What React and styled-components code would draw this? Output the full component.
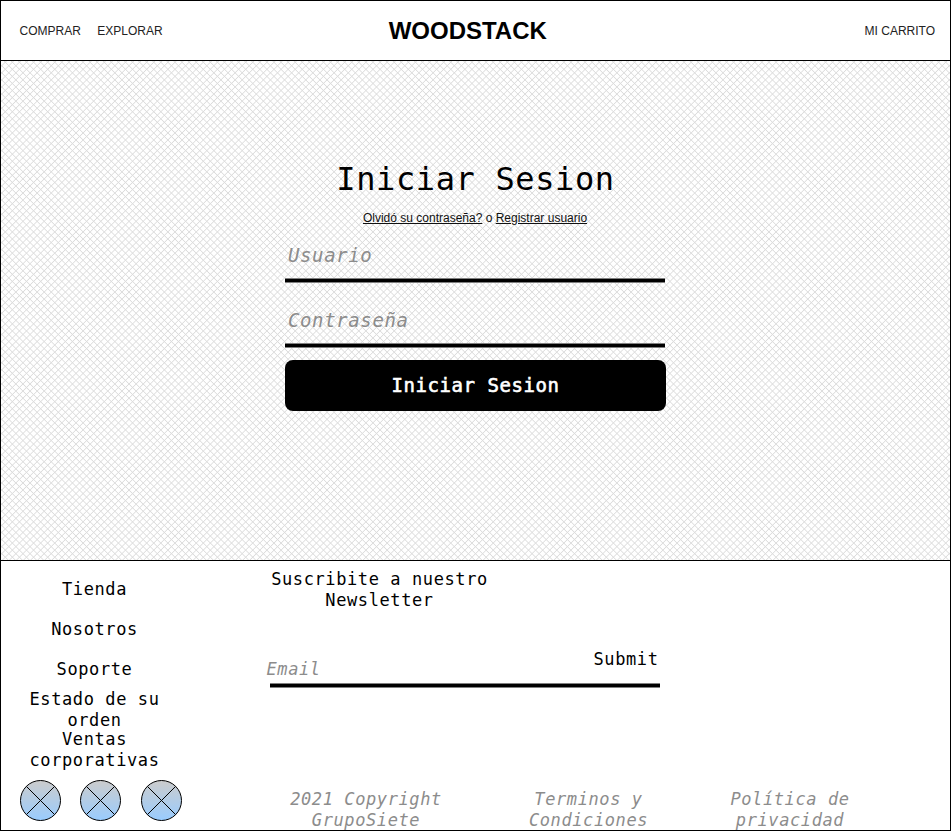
import React from "react";
import styled, { createGlobalStyle } from "styled-components";

const MONO = '"DejaVu Sans Mono", monospace';

const GlobalStyle = createGlobalStyle`
  * { box-sizing: border-box; }
  body { margin: 0; background: #fff; color: #000; font-family: "Liberation Sans", Arial, sans-serif; }
  h1, h2, p { margin: 0; font-weight: 400; }
  a { color: inherit; }
`;

const Page = styled.div`
  width: 951px;
  height: 831px;
  border: 1px solid #000;
  display: grid;
  grid-template-rows: 60px 500px 269px;
  overflow: hidden;
`;

const Header = styled.header`
  display: grid;
  grid-template-columns: 1fr auto 1fr;
  align-items: center;
  padding: 0 15px 0 18.5px;
  border-bottom: 1px solid #000;
`;

const Nav = styled.nav`
  display: flex;
  gap: 16.5px;
  justify-content: ${(p) => (p.$end ? "flex-end" : "flex-start")};
  font-size: 12px;
  line-height: 14px;
`;

const NavLink = styled.a`
  color: #222;
  text-decoration: none;
`;

const Brand = styled.div`
  font-size: 24px;
  font-weight: 700;
  line-height: 28px;
  margin-right: 19px;
`;

const Main = styled.main`
  display: flex;
  flex-direction: column;
  align-items: center;
  padding-top: 98px;
  border-bottom: 1px solid #000;
  background:
    repeating-linear-gradient(45deg, #dcdcdc 0, transparent 0.8px, transparent 4.2px, #dcdcdc 5px),
    repeating-linear-gradient(-45deg, #dcdcdc 0, transparent 0.8px, transparent 4.2px, #dcdcdc 5px),
    #fff;
`;

const Title = styled.h1`
  font: 400 32px/40px ${MONO};
  letter-spacing: 0.62px;
`;

const Help = styled.p`
  margin-top: 12px;
  margin-right: 1px;
  font-size: 12px;
  line-height: 14px;
  color: #111;
`;

const Form = styled.div`
  width: 381px;
  margin-top: 17px;
  display: flex;
  flex-direction: column;
`;

const Field = styled.div`
  height: 65px;
  padding-left: 3px;
  font: italic 400 19px/26px ${MONO};
  letter-spacing: 0.62px;
  color: #8c8c8c;
`;

const Rule = styled.div`
  width: ${(p) => p.$width}px;
  height: 5px;
  background: #000;
  border: solid #808080;
  border-width: 1px 0;
  margin-top: ${(p) => p.$top}px;
  margin-left: ${(p) => p.$left}px;
`;

const LoginButton = styled.button`
  height: 51px;
  margin-top: -12px;
  padding-bottom: 3px;
  border: 0;
  border-radius: 8px;
  background: #000;
  color: #fff;
  font: 400 19px/24px ${MONO};
  letter-spacing: 0.56px;
  -webkit-text-stroke: 0.6px #fff;
`;

const Footer = styled.footer`
  display: grid;
  grid-template-columns: 189px 1fr;
  column-gap: 60px;
  font: 400 17px/21px ${MONO};
  letter-spacing: 0.6px;
`;

const SideColumn = styled.div`
  display: flex;
  flex-direction: column;
  padding-top: 8px;
`;

const SideLink = styled.p`
  width: 160px;
  margin-left: 13.5px;
  height: ${(p) => p.$height}px;
  padding-top: ${(p) => p.$pad || 0}px;
  text-align: center;
`;

const Socials = styled.div`
  display: flex;
  gap: 18px;
  margin: 0 0 0 18px;
`;

const Social = styled.svg`
  display: block;
  width: 42px;
  height: 42px;
  margin-left: ${(p) => p.$shift || 0}px;
`;

const Content = styled.div`
  display: grid;
  grid-template-rows: 88px 140px 41px;
`;

const Newsletter = styled.h2`
  width: 240px;
  margin-left: 9.5px;
  padding-top: 8px;
  font: inherit;
  text-align: center;
`;

const Subscribe = styled.div`
  width: 411px;
  padding-left: 15px;
`;

const SubscribeRow = styled.div`
  display: flex;
  justify-content: space-between;
  align-items: flex-start;
  height: 34px;
`;

const Email = styled.span`
  padding: 10px 0 0 1.5px;
  font-style: italic;
  color: #8c8c8c;
`;

const Submit = styled.span`
  margin-right: 2.5px;
`;

const Legal = styled.div`
  display: grid;
  grid-template-columns: 231px 214px 189px;
  font-style: italic;
  color: #8c8c8c;
  text-align: center;
`;

const LegalText = styled.p`
  padding: 0 9px 0 10px;
`;

function CircleIcon({ shift }) {
  return (
    <Social viewBox="0 0 42 42" $shift={shift} aria-hidden="true">
      <defs>
        <linearGradient id="sky" x1="0" y1="0" x2="0" y2="1">
          <stop offset="0" stopColor="#cccccc" />
          <stop offset="1" stopColor="#99ccff" />
        </linearGradient>
      </defs>
      <circle cx="21.5" cy="21.5" r="20" fill="url(#sky)" stroke="#000" />
      <path d="M7.4 7.4 35.6 35.6M35.6 7.4 7.4 35.6" stroke="#000" fill="none" />
    </Social>
  );
}

export default function App() {
  return (
    <>
      <GlobalStyle />
      <Page>
        <Header>
          <Nav>
            <NavLink>COMPRAR</NavLink>
            <NavLink>EXPLORAR</NavLink>
          </Nav>
          <Brand>WOODSTACK</Brand>
          <Nav $end>
            <NavLink>MI CARRITO</NavLink>
          </Nav>
        </Header>
        <Main>
          <Title>Iniciar Sesion</Title>
          <Help>
            <u>Olvidó su contraseña?</u> o <u>Registrar usuario</u>
          </Help>
          <Form>
            <Field>
              Usuario
              <Rule $width={380} $top={10} $left={-3} />
            </Field>
            <Field>
              Contraseña
              <Rule $width={380} $top={10} $left={-3} />
            </Field>
            <LoginButton>Iniciar Sesion</LoginButton>
          </Form>
        </Main>
        <Footer>
          <SideColumn>
            <SideLink $height={40} $pad={10}>Tienda</SideLink>
            <SideLink $height={40} $pad={10}>Nosotros</SideLink>
            <SideLink $height={40} $pad={10}>Soporte</SideLink>
            <SideLink $height={40}>Estado de su orden</SideLink>
            <SideLink $height={50}>Ventas corporativas</SideLink>
            <Socials>
              <CircleIcon />
              <CircleIcon />
              <CircleIcon shift={1} />
            </Socials>
          </SideColumn>
          <Content>
            <Newsletter>Suscribite a nuestro Newsletter</Newsletter>
            <Subscribe>
              <SubscribeRow>
                <Email>Email</Email>
                <Submit>Submit</Submit>
              </SubscribeRow>
              <Rule $width={390} $top={0} $left={5} />
            </Subscribe>
            <Legal>
              <LegalText>2021 Copyright GrupoSiete</LegalText>
              <LegalText>Terminos y Condiciones</LegalText>
              <LegalText>Política de privacidad</LegalText>
            </Legal>
          </Content>
        </Footer>
      </Page>
    </>
  );
}
